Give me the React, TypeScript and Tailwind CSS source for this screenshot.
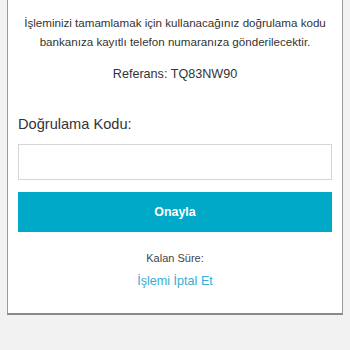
export default function App() {
  return (
    <div
      className="h-[350px] w-[350px] overflow-hidden bg-[#f2f2f2]"
      style={{ fontFamily: '"Liberation Sans", Arial, sans-serif' }}
    >
      <div className="mx-[7px] border-x border-b-2 border-x-[#9a9a9a] border-b-[#8a8a8a] bg-white px-[10px] pb-[23px] pt-[13px]">
        <p className="whitespace-nowrap text-center text-[11.6px] leading-[19px] text-[#333]">
          İşleminizi tamamlamak için kullanacağınız doğrulama kodu
          <br />
          bankanıza kayıtlı telefon numaranıza gönderilecektir.
        </p>
        <p className="mt-[14px] text-center text-[12.6px] leading-[18px] text-[#333]">
          Referans: TQ83NW90
        </p>
        <label className="mt-[31px] block text-[14.6px] leading-[20px] text-[#333]">
          Doğrulama Kodu:
        </label>
        <input
          type="text"
          className="mt-[10px] block h-[36px] w-full border border-[#d6d6d6] bg-white px-2 outline-none"
        />
        <button className="mt-[12px] flex h-[40px] w-full items-center justify-center bg-[#00a9c7] text-[12.4px] font-bold text-white">
          Onayla
        </button>
        <p className="mt-[19px] text-center text-[11px] leading-[15px] text-[#444]">
          Kalan Süre:
        </p>
        <p className="mt-[6px] text-center text-[12.6px] leading-[18px] text-[#38aed0]">
          İşlemi İptal Et
        </p>
      </div>
    </div>
  );
}
